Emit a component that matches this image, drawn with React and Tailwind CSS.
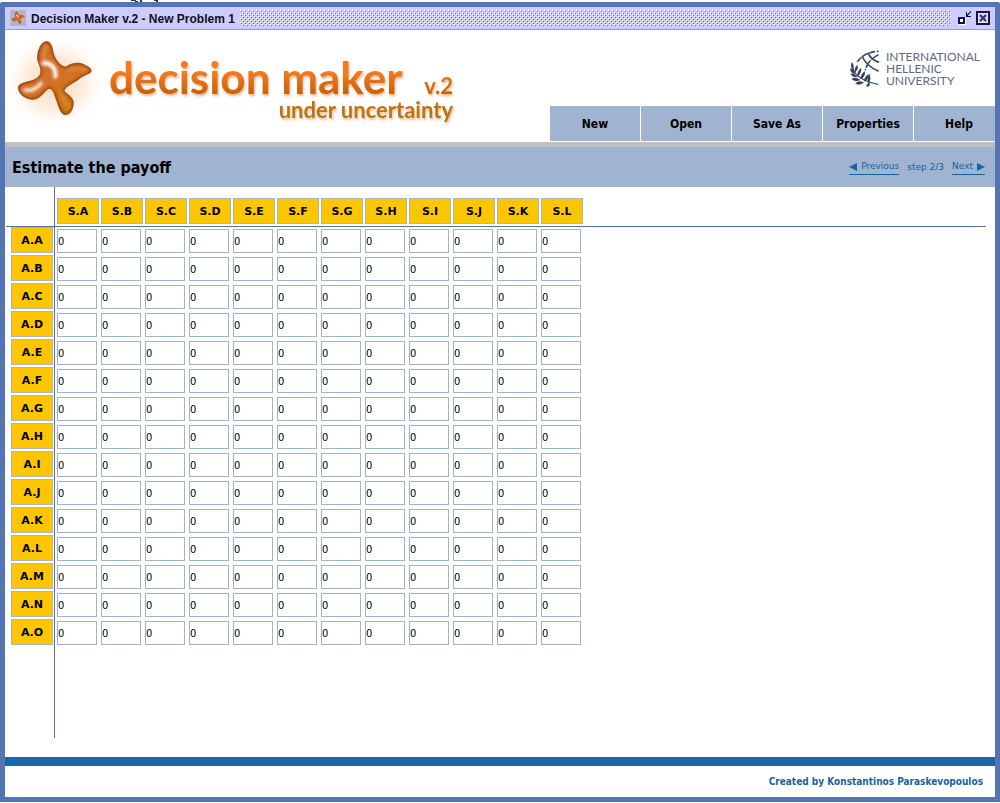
import React, { useState } from "react";

const columns = ["S.A", "S.B", "S.C", "S.D", "S.E", "S.F", "S.G", "S.H", "S.I", "S.J", "S.K", "S.L"];
const rows = ["A.A", "A.B", "A.C", "A.D", "A.E", "A.F", "A.G", "A.H", "A.I", "A.J", "A.K", "A.L", "A.M", "A.N", "A.O"];
const menu = ["New", "Open", "Save As", "Properties", "Help"];

const STAR =
  "M122 34C136 32 142 46 146 68C152 90 166 108 182 110C200 100 216 94 236 103C250 108 260 116 260 123C258 132 240 134 224 146C206 160 184 168 178 180C180 192 206 198 206 218C206 238 196 256 180 255C166 252 160 228 152 206C147 192 146 180 134 176C120 176 112 208 82 209C58 208 38 190 39 172C42 158 64 156 84 150C104 142 108 132 106 118C104 104 94 94 97 76C100 54 108 38 122 34Z";

const StarLogo = () => (
  <svg viewBox="0 0 300 300" className="size-[100px] shrink-0" aria-hidden="true">
    <defs>
      <radialGradient id="glow">
        <stop offset="0" stopColor="#fad4ae" />
        <stop offset="0.55" stopColor="#fdeee0" />
        <stop offset="1" stopColor="#ffffff" stopOpacity="0" />
      </radialGradient>
      <linearGradient id="clay" x1="0" y1="0" x2="0.6" y2="1">
        <stop offset="0" stopColor="#cc6a22" />
        <stop offset="0.5" stopColor="#d2702c" />
        <stop offset="1" stopColor="#cc780f" />
      </linearGradient>
      <filter id="soft" x="-50%" y="-50%" width="200%" height="200%">
        <feGaussianBlur stdDeviation="4" />
      </filter>
      <clipPath id="starClip">
        <path d={STAR} />
      </clipPath>
    </defs>
    <ellipse cx="150" cy="155" rx="165" ry="150" fill="url(#glow)" />
    <path d={STAR} fill="url(#clay)" />
    <g clipPath="url(#starClip)" fill="none" strokeLinecap="round" filter="url(#soft)">
      <path d={STAR} stroke="#8a3a08" strokeWidth="8" />
      <path d="M122 50C116 64 114 76 120 88" stroke="#e2935c" strokeWidth="7" />
      <path d="M116 100C138 96 154 116 151 140" stroke="#ffffff" strokeWidth="12" />
      <path d="M60 180C84 186 98 172 108 160" stroke="#fff0ea" strokeWidth="10" />
      <path d="M190 122C210 112 226 114 240 120" stroke="#e08b45" strokeWidth="6" />
      <path d="M168 192C174 212 184 220 192 232" stroke="#e0913c" strokeWidth="6" />
    </g>
  </svg>
);

const LaurelLogo = () => (
  <svg viewBox="0 0 90 112" className="h-[37px] w-[30px]" fill="none" stroke="#3b4a68" aria-hidden="true">
    <g strokeWidth="5">
      <path d="M22 36Q42 6 86 4" strokeDasharray="18 5" />
      <path d="M36 18Q48 48 86 64" />
      <path d="M54 8Q62 30 88 37" />
      <path d="M86 14Q50 34 46 62" strokeDasharray="26 4" />
    </g>
    <path d="M7 52Q16 90 84 104" strokeWidth="4" />
    <g fill="#2c3d5e" stroke="#2c3d5e" strokeWidth="1">
      <path d="M8 60Q-1 48 6 38Q13 48 8 60Z" />
      <path d="M13 72Q0 68 1 56Q12 60 13 72Z" />
      <path d="M21 82Q6 83 2 72Q15 70 21 82Z" />
      <path d="M30 91Q15 98 5 88Q17 80 30 91Z" />
      <path d="M41 98Q27 109 16 101Q26 91 41 98Z" />
      <path d="M14 68Q13 52 22 46Q26 58 14 68Z" />
      <path d="M22 80Q22 62 33 55Q36 68 22 80Z" />
      <path d="M32 88Q33 72 44 65Q47 79 32 88Z" />
      <path d="M42 95Q44 80 55 74Q57 88 42 95Z" />
      <path d="M55 102Q51 86 58 73Q65 88 55 102Z" />
      <path d="M58 99Q44 110 53 111Q62 108 58 99Z" />
    </g>
  </svg>
);

const TitleBar = () => (
  <div className="flex h-[23px] items-center border-b border-[#9a9ad0] bg-[#ccccff] px-[5px]">
    <svg viewBox="0 0 300 300" className="size-4 bg-[#b3b5c4]" aria-hidden="true">
      <path d={STAR} fill="#d2691e" stroke="#a84a10" strokeWidth="12" />
      <path d="M116 100Q150 100 151 140" fill="none" stroke="#ffe0c8" strokeWidth="20" />
    </svg>
    <h1 className="ml-[5px] pt-px font-['Liberation_Sans',sans-serif] text-[12px] font-bold whitespace-nowrap text-[#111122]">
      Decision Maker v.2 - New Problem 1
    </h1>
    <svg className="mr-[7px] ml-[5px] h-4 min-w-0 flex-1" aria-hidden="true">
      <defs>
        <pattern id="bumps" width="4" height="4" patternUnits="userSpaceOnUse">
          <path d="M0 0h1v1h-1zM2 2h1v1h-1z" fill="#ffffff" />
          <path d="M1 1h1v1h-1zM3 3h1v1h-1z" fill="#666699" />
        </pattern>
      </defs>
      <rect width="100%" height="100%" fill="url(#bumps)" />
    </svg>
    <button type="button" aria-label="Restore">
      <svg viewBox="0 0 14 14" className="size-[14px]" shapeRendering="crispEdges">
        <path d="M1 7h7v7h-7z" fill="#ffffff" />
        <path d="M0 6h7v7h-7z" fill="#15153f" />
        <path d="M2 8h3v3h-3z" fill="#ffffff" />
        <path d="M8 1h1v3h1v1h3v1h-5z" fill="#15153f" />
        <path d="M9 3h1v1h-1zM10 2h1v2h-1zM11 1h1v2h-1zM12 0h1v2h-1z" fill="#333366" />
      </svg>
    </button>
    <button type="button" aria-label="Close" className="ml-1">
      <svg viewBox="0 0 14 14" className="size-[14px]" fill="none">
        <path d="M2 2h10v10h-10z" stroke="#ffffff" strokeWidth="1" />
        <path d="M1 1h12v12h-12z" stroke="#15153f" strokeWidth="2" />
        <path d="M4 4l6 6M10 4l-6 6" stroke="#333366" strokeWidth="2" />
      </svg>
    </button>
  </div>
);

const Header = () => (
  <header className="flex h-28 overflow-hidden bg-white">
    <StarLogo />
    <div className="mt-7 ml-1 w-[344px] shrink-0 font-[Lato,sans-serif] font-bold drop-shadow-[1px_2px_1px_#f0b48c]">
      <div className="flex items-baseline justify-between bg-linear-to-b from-[#f47a20] from-30% to-[#b85c00] to-90% bg-clip-text leading-[38px] text-transparent">
        <span className="text-[44px]">decision maker</span>
        <span className="text-[22px]">v.2</span>
      </div>
      <div className="-mt-1 bg-linear-to-b from-[#c96c10] to-[#98801c] bg-clip-text pb-2 text-right text-[22px] leading-[18px] text-transparent">
        under uncertainty
      </div>
    </div>
    <div className="-mr-[9px] ml-auto flex shrink-0 flex-col justify-between">
      <div className="mt-5 mr-6 flex items-center justify-end gap-[6px]">
        <LaurelLogo />
        <p className="font-[Lato,sans-serif] text-[12px] leading-[12px] text-[#5d6a80]">
          INTERNATIONAL
          <br />
          HELLENIC
          <br />
          UNIVERSITY
        </p>
      </div>
      <nav className="mb-px flex gap-px">
        {menu.map((item) => (
          <button key={item} type="button" className="h-[35px] w-[90px] bg-[#a0b4d1] text-[12px] font-bold text-black">
            {item}
          </button>
        ))}
      </nav>
    </div>
  </header>
);

const StepBar = () => (
  <div className="flex h-[45px] items-center justify-between border-t-[5px] border-[#c0c0c0] bg-[#a0b4d1] pr-[10px] pl-[7px]">
    <h2 className="pt-[2px] text-[16px] font-bold text-black">Estimate the payoff</h2>
    <div className="flex items-center font-['DejaVu_Sans',sans-serif] text-[9px] leading-[15px] text-[#1862a0]">
      <a href="#" className="flex items-center gap-1 border-b border-[#1862a0]">
        <svg viewBox="0 0 8 8" className="size-2" fill="currentColor">
          <path d="M8 0v8L0 4z" />
        </svg>
        Previous
      </a>
      <span className="mx-2">step 2/3</span>
      <a href="#" className="flex items-center gap-1 border-b border-[#1862a0]">
        Next
        <svg viewBox="0 0 8 8" className="size-2" fill="currentColor">
          <path d="M0 0v8l8-4z" />
        </svg>
      </a>
    </div>
  </div>
);

const Label = ({ children }) => (
  <div className="flex h-[26px] w-[42px] items-center justify-center border border-[#a9b5b8] bg-[#fec600] pt-[3px] font-['DejaVu_Sans',sans-serif] text-[11px] font-bold text-black">
    {children}
  </div>
);

const PayoffTable = () => {
  const [values, setValues] = useState({});

  const handleChange = (key, value) => {
    setValues({ ...values, [key]: value });
  };

  return (
    <div className="flex-1 pr-[9px] pb-[19px] pl-px">
      <table className="w-full table-fixed border-separate border-spacing-0">
        <colgroup>
          <col className="w-[49px]" />
          {columns.map((col) => (
            <col key={col} className="w-[44px]" />
          ))}
          <col />
        </colgroup>
        <thead>
          <tr className="h-10">
            <td className="border-r border-b border-[#54739f] p-0"></td>
            {columns.map((col) => (
              <th key={col} scope="col" className="border-b border-[#54739f] p-0 pt-[11px] pb-[2px] pl-[2px]">
                <Label>{col}</Label>
              </th>
            ))}
            <td className="border-b border-[#54739f] p-0"></td>
          </tr>
        </thead>
        <tbody>
          {rows.map((row) => (
            <tr key={row} className="h-7">
              <th scope="row" className="border-r border-[#54739f] p-0 pb-[2px] pl-[5px]">
                <Label>{row}</Label>
              </th>
              {columns.map((col) => {
                const key = `${row} ${col}`;
                return (
                  <td key={col} className="p-0 pt-[2px] pb-[2px] pl-[2px]">
                    <input
                      type="text"
                      aria-label={key}
                      value={values[key] ?? "0"}
                      onChange={(e) => handleChange(key, e.target.value)}
                      className="block h-6 w-10 border border-[#a0b4c8] bg-white text-[11px] text-black"
                    />
                  </td>
                );
              })}
              <td></td>
            </tr>
          ))}
          {/* keeps the vertical rule running below the last row */}
          <tr className="h-[91px]">
            <td className="border-r border-[#54739f] p-0"></td>
            <td colSpan={columns.length + 1}></td>
          </tr>
        </tbody>
      </table>
    </div>
  );
};

const App = () => {
  return (
    <div className="flex min-h-screen flex-col bg-white pb-px font-['DejaVu_Sans_Condensed','DejaVu_Sans',sans-serif]">
      <svg className="ml-[130px] h-[2px] w-9" viewBox="0 0 36 2" aria-hidden="true">
        <path d="M1 0h5v1h-5zM5 1h3v1h-3zM10 0h2v2h-2zM24 0h4v1h-4zM26 1h2v1h-2z" fill="#24375c" />
      </svg>
      <div className="flex flex-1 flex-col rounded-t-xs border-[5px] border-[#5574b4]">
        <TitleBar />
        <Header />
        <StepBar />
        <PayoffTable />
        <footer className="flex h-10 items-center justify-end border-t-[9px] border-[#1868ae] pr-3 pb-px text-[10px] font-bold text-[#1862a0]">
          Created by Konstantinos Paraskevopoulos
        </footer>
      </div>
    </div>
  );
};

export default App;
